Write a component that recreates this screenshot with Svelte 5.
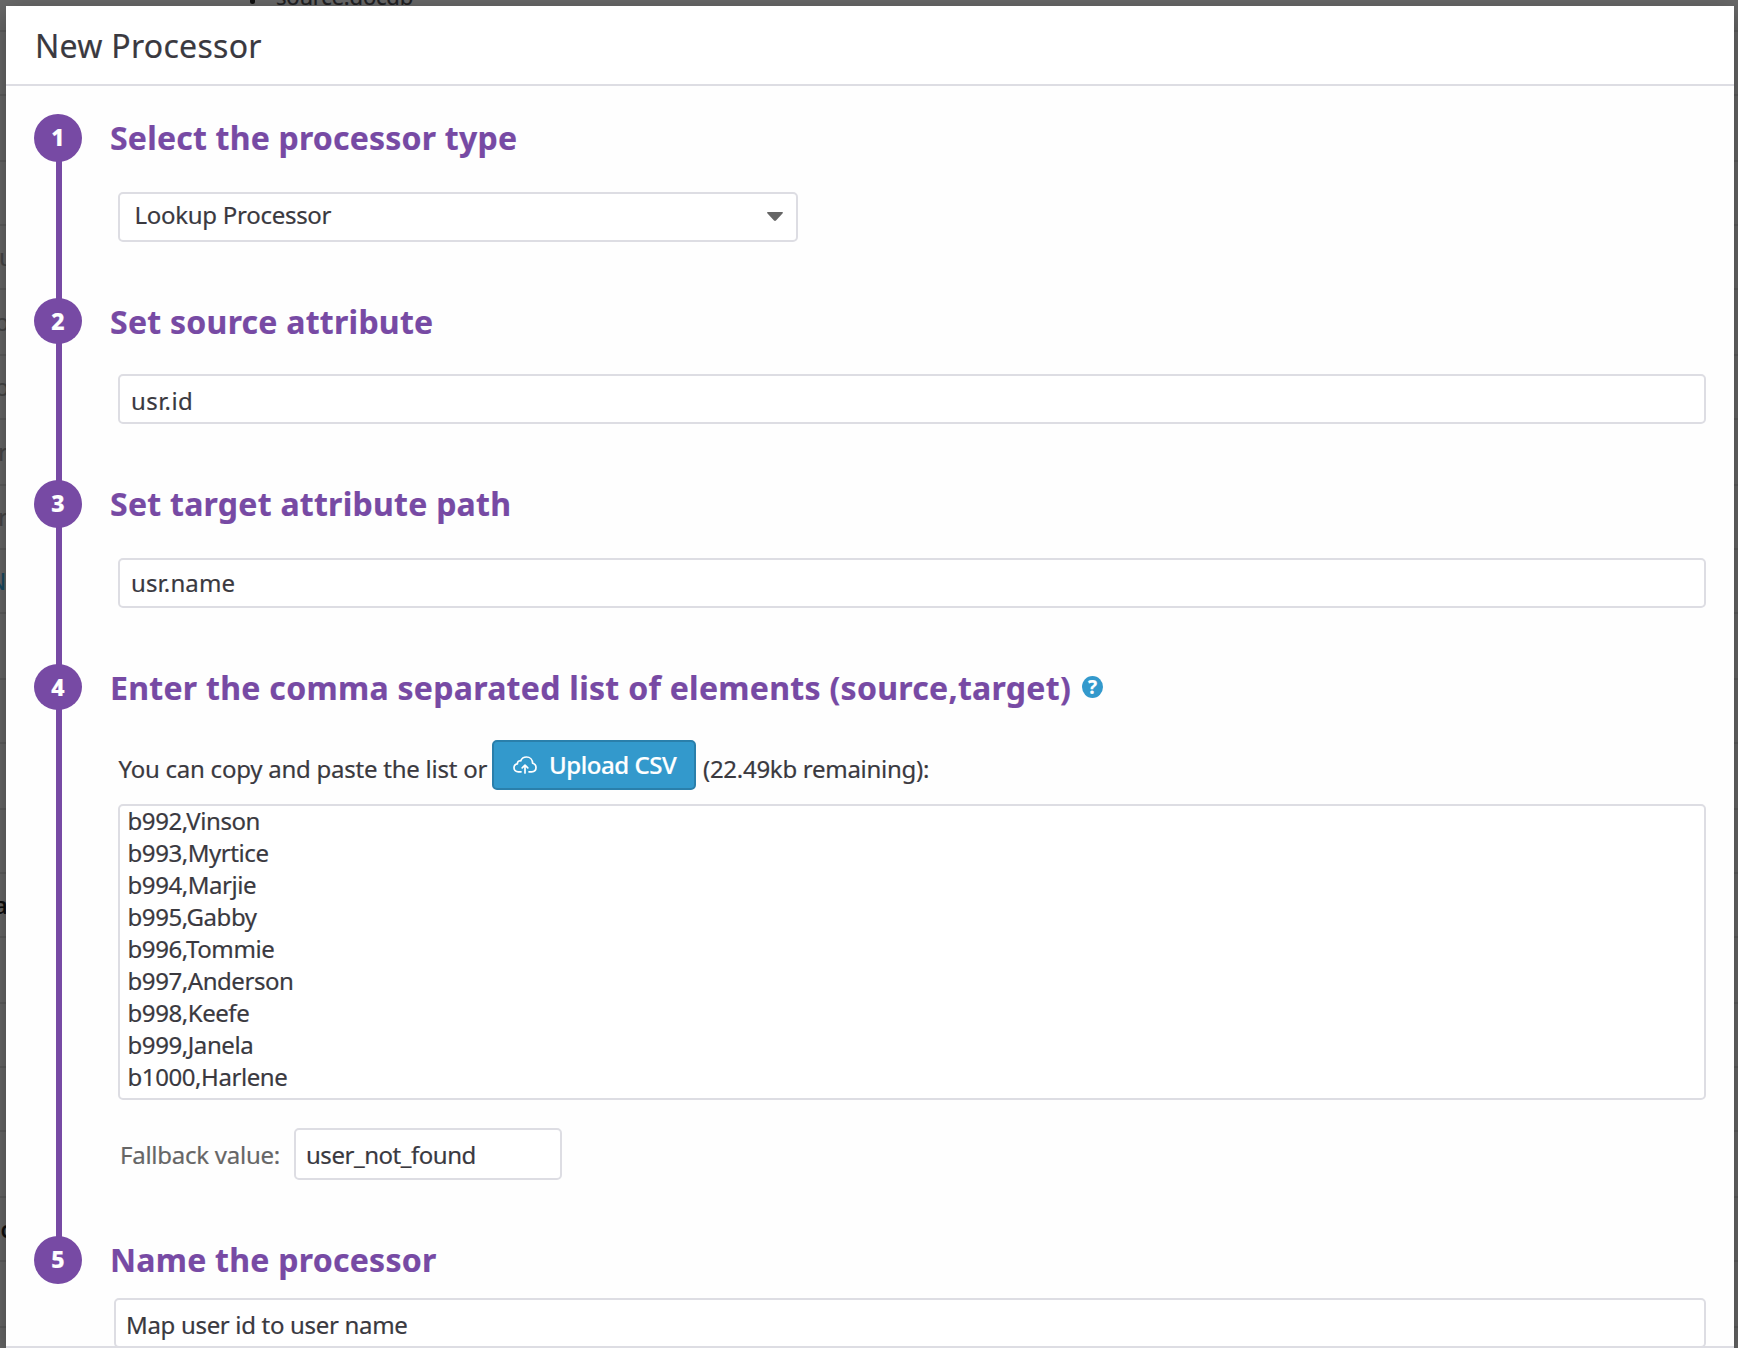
<script>
  const records = [
    'b992,Vinson', 'b993,Myrtice', 'b994,Marjie', 'b995,Gabby', 'b996,Tommie',
    'b997,Anderson', 'b998,Keefe', 'b999,Janela', 'b1000,Harlene'
  ];

  // Table rows dimmed behind the dialog; only their edges stay visible.
  const rows = [
    { h: 32 }, { h: 64 }, { h: 66 }, { h: 64 },
    { h: 64, text: 'u', x: -1 }, { h: 66, text: 'o', x: -5 }, { h: 64, text: 'o', x: -5 },
    { h: 66, text: 'r', x: -2 }, { h: 64, text: 'r', x: -2 },
    { h: 64, text: 'N', x: -12, tone: 'link' }, { h: 66 }, { h: 64 }, { h: 66 }, { h: 64 },
    { h: 64, text: 'a', x: -6, tone: 'strong' }, { h: 66 }, { h: 64 }, { h: 64 }, { h: 66 },
    { h: 64, text: 'ic', x: -6, tone: 'strong' }, { h: 66 }, { h: 64 }
  ];
</script>

{#snippet rail(n, last = false)}
  <div class="rail">
    <span class="num">{n}</span>
    {#if !last}<span class="line"></span>{/if}
  </div>
{/snippet}

<div class="screen">
  <div class="backdrop">
    {#each rows as row}
      <div class="row" style:height="{row.h}px">
        {#if row.text}<span class={row.tone ?? 'muted'} style:margin-left="{row.x}px">{row.text}</span>{/if}
      </div>
    {/each}
    <div class="bullet"><i></i><span>source.docdb</span></div>
  </div>

  <section class="modal">
    <header><h1>New Processor</h1></header>
    <div class="body">
      <div class="step s1">
        {@render rail(1)}
        <div class="content">
          <h2>Select the processor type</h2>
          <div class="field select">
            <span>Lookup Processor</span>
            <svg width="16" height="10" viewBox="0 0 16 10"><path d="M.8 0h14.4c.7 0 1 .8.5 1.300L9 8.600c-.6.6-1.400.6-2 0L.3 1.300C-.2.8.1 0 .8 0z" fill="#666" /></svg>
          </div>
        </div>
      </div>
      <div class="step s2">
        {@render rail(2)}
        <div class="content">
          <h2>Set source attribute</h2>
          <div class="field low">usr.id</div>
        </div>
      </div>
      <div class="step s3">
        {@render rail(3)}
        <div class="content">
          <h2>Set target attribute path</h2>
          <div class="field">usr.name</div>
        </div>
      </div>
      <div class="step s4">
        {@render rail(4)}
        <div class="content">
          <h2>
            <span>Enter the comma separated list of elements (source,target)</span>
            <span class="help">?</span>
          </h2>
          <div class="upload">
            <span class="lead">You can copy and paste the list or</span>
            <button type="button">
              <svg width="24" height="18" viewBox="0 0 24 18" fill="none" stroke="#fff" stroke-width="1.700" stroke-linecap="round" stroke-linejoin="round">
                <path d="M8 15.800H5.300C2.800 15.800 1 14 1 11.800c0-2 1.400-3.600 3.400-3.900C4.300 5.700 5.800 4.500 7.700 4.800 8.700 2.400 10.900 1 13.500 1c3.500 0 6 2.500 6.100 6.300 2 .5 3.400 2.100 3.400 4.200 0 2.500-1.800 4.300-4.300 4.300H16" />
                <path d="M12 17V9.300M9.200 11.900 12 9.200l2.800 2.700" />
              </svg>
              <span>Upload CSV</span>
            </button>
            <span class="tail">(22.49kb remaining):</span>
          </div>
          <div class="list">
            {#each records as record}<div>{record}</div>{/each}
          </div>
          <div class="fallback">
            <span class="label">Fallback value:</span>
            <div class="field">user_not_found</div>
          </div>
        </div>
      </div>
      <div class="step s5">
        {@render rail(5, true)}
        <div class="content">
          <h2>Name the processor</h2>
          <div class="field low">Map user id to user name</div>
        </div>
      </div>
    </div>
    <footer></footer>
  </section>
</div>

<style>
  :global(body) { margin: 0; overflow: hidden; }
  .screen {
    position: relative;
    box-sizing: border-box;
    width: 1738px;
    height: 1348px;
    padding: 6px 4px 0 6px;
    overflow: hidden;
    background: #686868;
    color: #3a393f;
    font: 24px/32px "Noto Sans", "Open Sans", sans-serif;
    -webkit-text-stroke: .2px currentColor;
  }
  .backdrop { position: absolute; inset: 0; overflow: hidden; }
  .row {
    box-sizing: border-box;
    display: flex;
    align-items: center;
    border-bottom: 2px solid #5d5d5d;
  }
  .muted { color: #464646; }
  .link { color: #174a63; }
  .strong { color: #0c0c0c; font-weight: 500; }
  .bullet {
    position: absolute;
    left: 250px;
    top: -20px;
    display: flex;
    align-items: center;
    gap: 21px;
    color: #202022;
    font-size: 22px;
    line-height: 32px;
    letter-spacing: -.2px;
  }
  .bullet i { width: 5px; height: 7px; border-radius: 3px; background: #111; margin-top: 9px; }

  .modal {
    position: relative;
    display: flex;
    flex-direction: column;
    height: 1342px;
    background: #fefefe;
    box-shadow: 0 8px 24px rgba(0, 0, 0, .35);
  }
  header {
    flex: none;
    box-sizing: border-box;
    display: flex;
    align-items: center;
    height: 80px;
    padding: 2px 0 0 29px;
    background: #fff;
    border-bottom: 2px solid #dddde3;
  }
  h1 { margin: 0; font-size: 32px; line-height: 48px; font-weight: 400; letter-spacing: .28px; }
  .body { flex: 1; min-height: 0; overflow: hidden; padding: 28px 28px 0; }
  footer { flex: none; height: 2px; background: #dddde3; }

  .step { display: flex; gap: 28px; }
  .s1, .s3 { height: 184px; }
  .s2 { height: 182px; }
  .s4 { height: 572px; }
  .rail { flex: none; display: flex; flex-direction: column; width: 48px; }
  .num {
    position: relative;
    z-index: 1;
    height: 48px;
    border-radius: 50%;
    background: #774aa4;
    color: #fff;
    font-size: 23px;
    line-height: 46px;
    font-weight: 800;
    text-align: center;
  }
  .s2 .num, .s4 .num { height: 46px; }
  .line { flex: 1; width: 6px; margin: -4px 0 -4px 22px; background: #774aa4; }
  .content { flex: 1; min-width: 0; }
  h2 {
    display: flex;
    align-items: center;
    margin: 0;
    height: 48px;
    color: #774aa4;
    font-size: 32px;
    line-height: 48px;
    font-weight: 700;
    letter-spacing: .26px;
    white-space: nowrap;
  }
  .s1 h2 { letter-spacing: .21px; }
  .s4 h2 { letter-spacing: .29px; }
  .help {
    width: 21px;
    height: 22px;
    margin: -2px 0 0 11px;
    border-radius: 50%;
    background: #39c;
    color: #fff;
    font-size: 19px;
    line-height: 22px;
    letter-spacing: 0;
    text-align: center;
  }
  .field {
    box-sizing: border-box;
    display: flex;
    align-items: center;
    height: 50px;
    margin-left: 8px;
    padding: 0 11px;
    border: 2px solid #dddde3;
    border-radius: 5px;
    background: #fff;
    white-space: nowrap;
  }
  .low { padding-top: 3px; }
  .select { width: 680px; justify-content: space-between; margin-top: 30px; padding: 0 13px 4px 14.5px; letter-spacing: -.28px; }
  .select svg { margin-top: 4px; }
  .s2 .field { margin-top: 28px; letter-spacing: .4px; }
  .s3 .field { margin-top: 30px; letter-spacing: .14px; }
  .s5 .field { margin: 14px 0 0 4px; padding-left: 10px; letter-spacing: -.32px; }

  .upload { display: flex; margin: 28px 0 0 8px; height: 50px; white-space: nowrap; }
  .lead, .tail { padding-top: 13px; letter-spacing: -.24px; }
  .tail { letter-spacing: -.28px; }
  .lead { box-sizing: border-box; width: 374px; padding-left: .5px; }
  button {
    box-sizing: border-box;
    display: flex;
    align-items: center;
    gap: 12px;
    width: 204px;
    height: 50px;
    margin: 0 7px 0 0;
    padding: 0 0 0 19px;
    border: 2px solid #2a7fab;
    border-radius: 5px;
    background: #39c;
    color: #fff;
    font: 500 24px/32px "Noto Sans", "Open Sans", sans-serif;
    letter-spacing: -.45px;
    white-space: nowrap;
  }
  .list {
    box-sizing: border-box;
    height: 296px;
    margin: 14px 0 0 8px;
    padding-left: 7.5px;
    border: 2px solid #dddde3;
    border-radius: 5px;
    background: #fff;
    letter-spacing: -.43px;
  }
  .list div { position: relative; top: -1px; }
  .fallback { display: flex; align-items: center; margin: 28px 0 0 10px; white-space: nowrap; }
  .label { width: 174px; padding-top: 2px; color: #666; letter-spacing: -.25px; }
  .fallback .field { width: 268px; height: 52px; margin: 0; padding: 2px 0 0 10px; letter-spacing: -.46px; }
</style>
